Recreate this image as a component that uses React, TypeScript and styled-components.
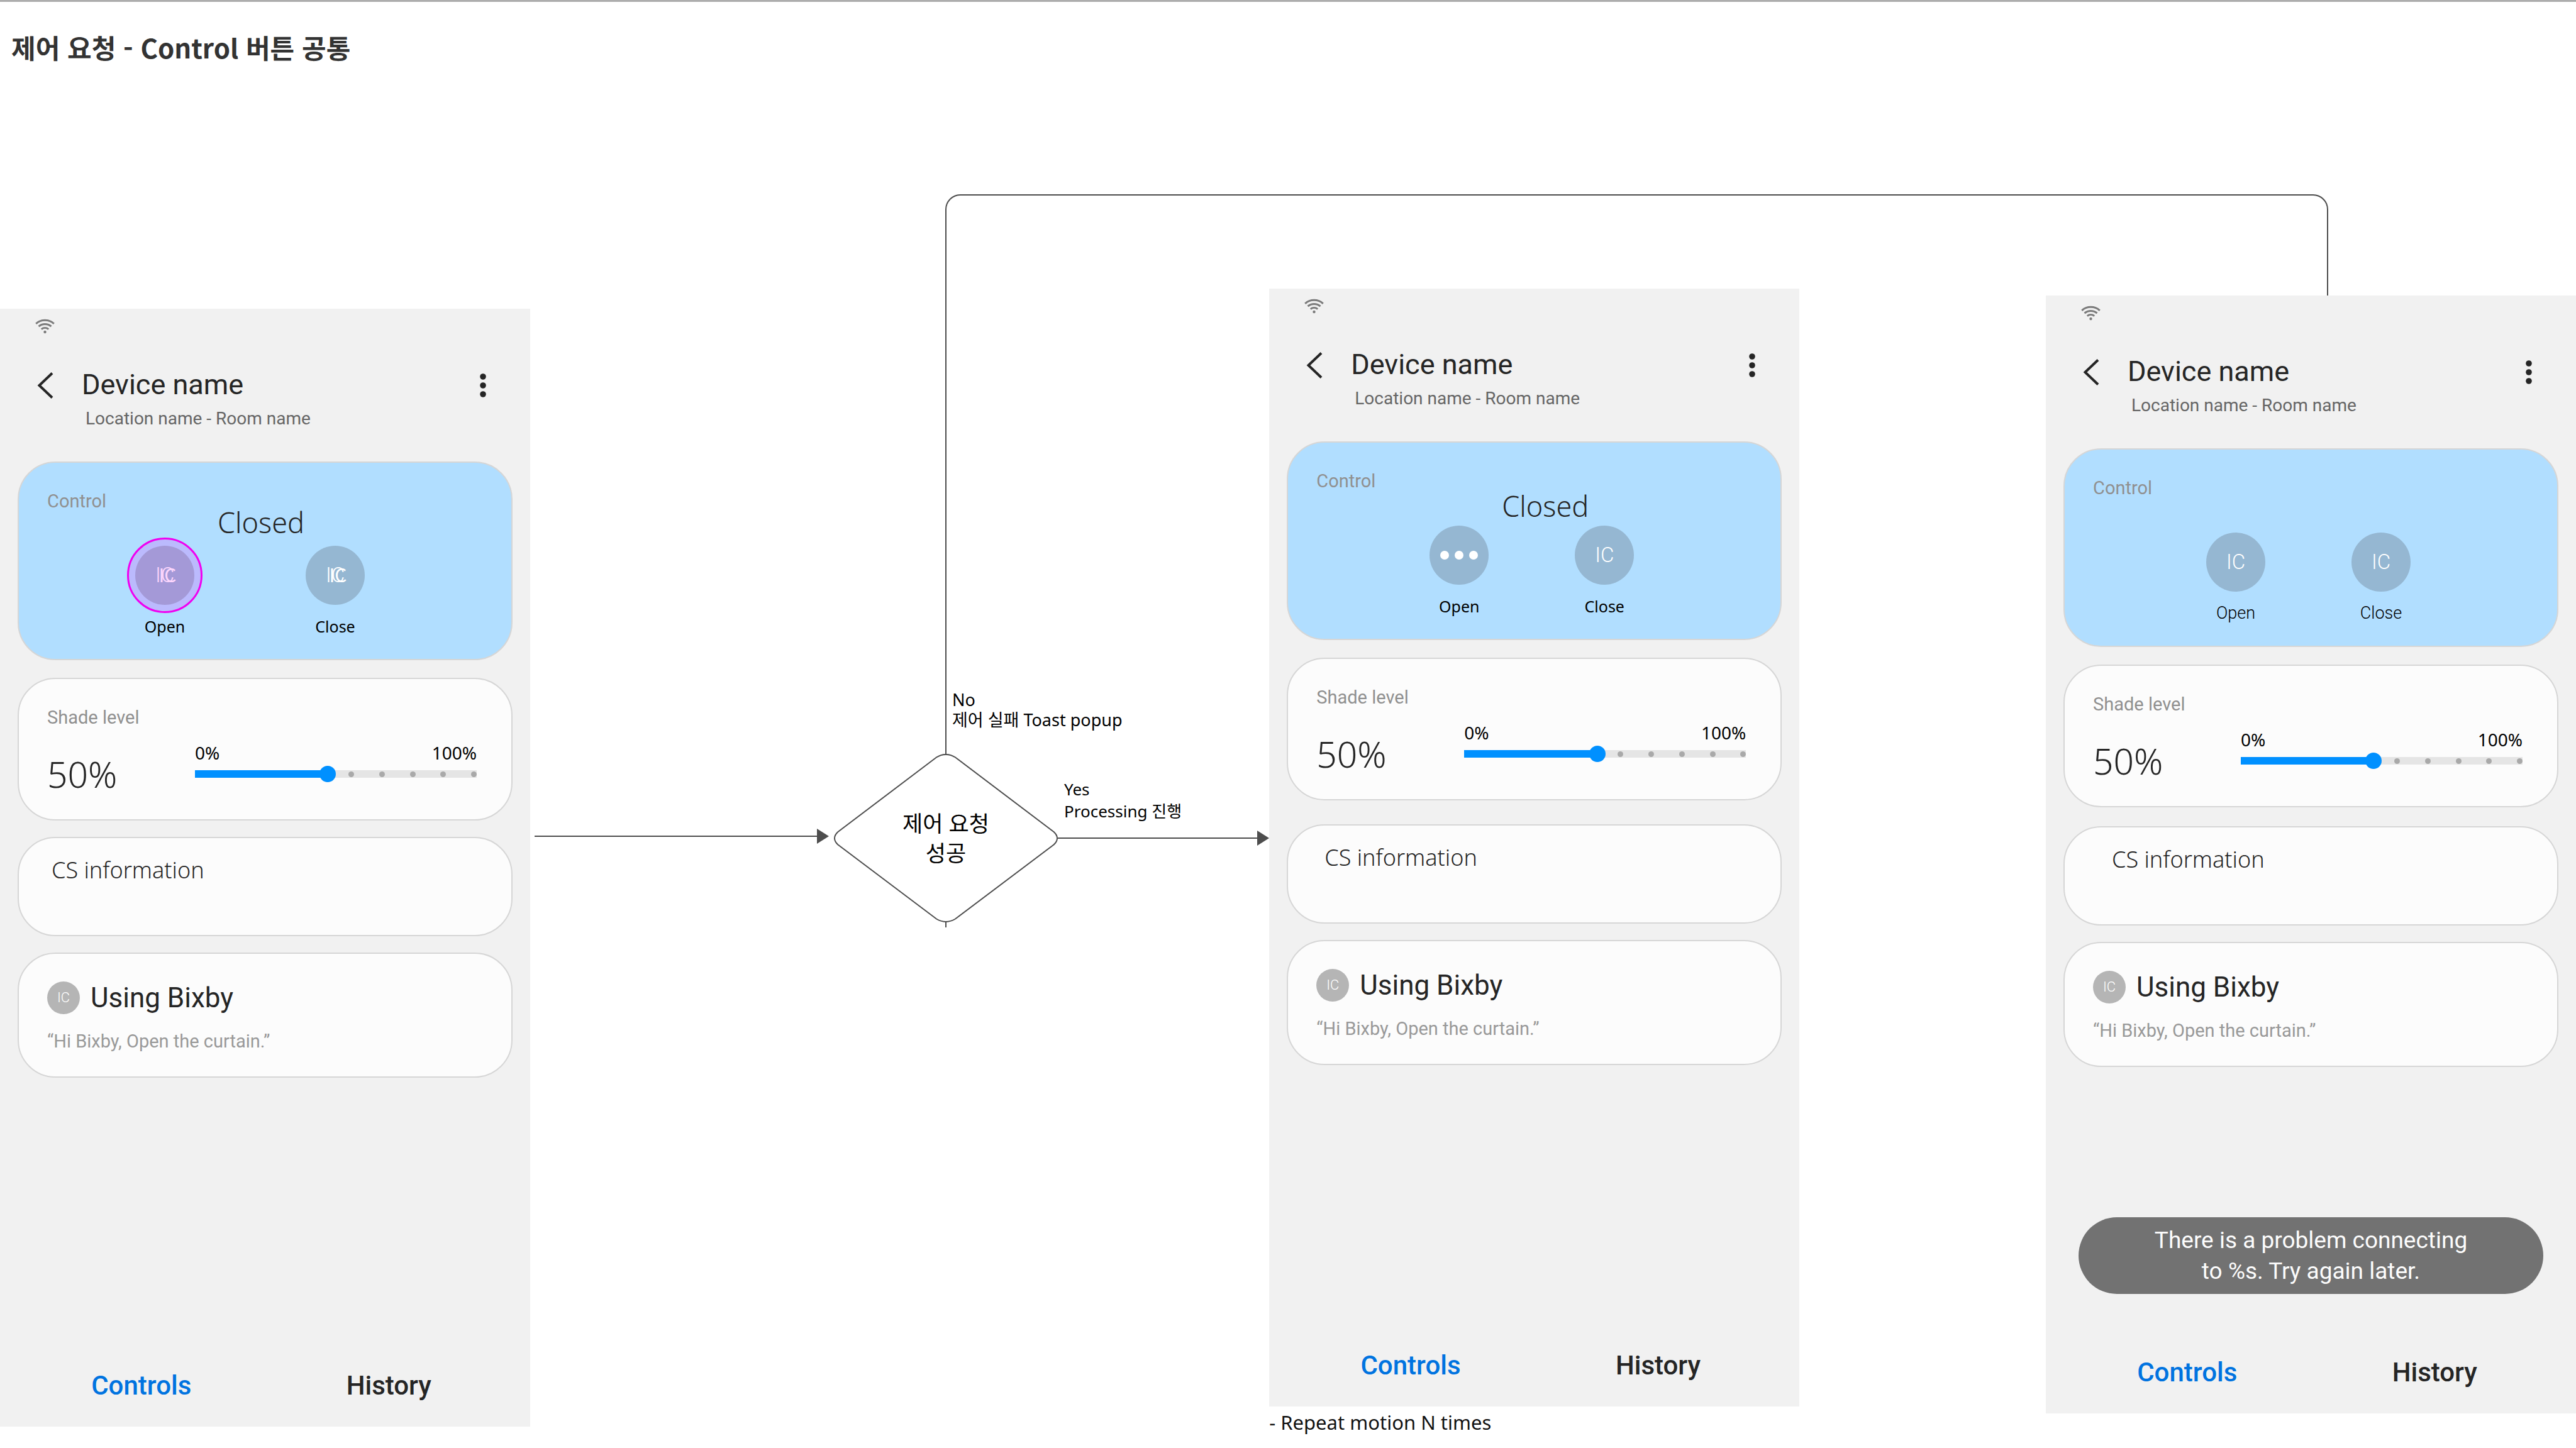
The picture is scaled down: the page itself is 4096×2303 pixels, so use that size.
import React from 'react';
import styled, { createGlobalStyle } from 'styled-components';

const samsung = '"Noto Sans", "Noto Sans CJK KR", sans-serif';
const korean = '"Noto Sans CJK KR", "Noto Sans", sans-serif';
const roboto = 'Roboto, "Noto Sans CJK KR", sans-serif';

const GlobalStyle = createGlobalStyle`
  *, *::before, *::after { box-sizing: border-box; }
  body { margin: 0; background: #fff; color: #000; font-family: ${samsung}; }
  h1, h2, h3, p { margin: 0; font-weight: 400; }
  button { border: 0; padding: 0; background: none; color: inherit; font: inherit; cursor: pointer; }
`;

const Page = styled.main`
  border-top: 3px solid #adadad;
`;

const PageTitle = styled.h1`
  padding: 42px 18px 2px;
  font: 700 42px/60px ${korean};
  color: #333;
`;

const Board = styled.div`
  display: grid;
  grid-template-columns: 843px 3fr 843px 1fr 843px;
  align-items: start;
`;

const ReturnPath = styled.div`
  grid-area: 1 / 2 / 2 / 6;
  height: 1166px;
  margin: 202px 394px 0 660px;
  border: 2px solid #4d4d4d;
  border-bottom: 0;
  border-radius: 24px 24px 0 0;
`;

const Column = styled.div<{ $col: number; $top: number }>`
  grid-area: 1 / ${(p) => p.$col};
  padding-top: ${(p) => p.$top}px;
  position: relative;
`;

/* ---------- flow chart ---------- */

const Flow = styled.div`
  position: relative;
  display: flex;
  align-items: center;
`;

const FirstArrow = styled.div`
  display: flex;
  align-items: center;
  width: 483px;
  padding: 0 8px 6px 7px;
`;

const NextArrow = styled.div`
  display: flex;
  flex: 1;
  align-items: center;
`;

const ArrowLine = styled.div`
  flex: 1;
  height: 2px;
  background: #4d4d4d;
`;

const Decision = styled.div`
  display: grid;
  place-items: center;
  width: 356px;
  height: 268px;
  text-align: center;
  font-size: 35px;
  line-height: 47px;
  > * { grid-area: 1 / 1; }
`;

const FlowNote = styled.p<{ $left: number; $top: number; $line: number; $size: number }>`
  position: absolute;
  left: ${(p) => p.$left}px;
  top: ${(p) => p.$top}px;
  font-size: ${(p) => p.$size}px;
  line-height: ${(p) => p.$line}px;
  white-space: nowrap;
`;

const Footnote = styled.p`
  font-size: 31px;
  line-height: 50px;
  color: #111;
`;

/* ---------- phone ---------- */

const Phone = styled.section`
  position: relative;
  display: flex;
  flex-direction: column;
  min-height: 1778px;
  background: #f1f1f1;
  color: #252525;
`;

const StatusBar = styled.div`
  height: 95px;
  padding: 15px 0 0 55px;
`;

const AppBar = styled.header`
  display: flex;
  align-items: flex-start;
  padding: 0 51px 48px 48px;
`;

const IconButton = styled.button`
  display: grid;
  place-items: center;
  width: 48px;
  height: 54px;
`;

const Heading = styled.div`
  flex: 1;
  padding-left: 34px;
  font-family: ${roboto};
`;

const DeviceName = styled.h2`
  font-size: 45px;
  line-height: 52px;
`;

const Location = styled.p`
  padding: 8px 0 0 6px;
  font-size: 28px;
  line-height: 40px;
  color: #666;
`;

const Cards = styled.div`
  display: flex;
  flex-direction: column;
  gap: 26px;
  padding: 0 28px;
`;

const Card = styled.article<{ $blue?: boolean; $gap?: number }>`
  margin-top: ${(p) => p.$gap ?? 0}px;
  padding: 41px 44px 32px 45px;
  border: 2px solid #d6d6d6;
  border-radius: 60px;
  background: ${(p) => (p.$blue ? '#b1deff' : '#fcfcfc')};
`;

const CardLabel = styled.h3`
  font: 400 29px/40px ${roboto};
  color: #909090;
`;

const State = styled.div<{ $start: number; $drop: number }>`
  height: 51px;
  padding: ${(p) => p.$drop}px 0 0 ${(p) => p.$start}px;
  font-size: 45px;
  font-weight: 300;
  line-height: 28px;
`;

const Actions = styled.div<{ $start: number; $gap: number }>`
  display: flex;
  gap: ${(p) => p.$gap}px;
  padding-left: ${(p) => p.$start}px;
`;

const ActionButton = styled.button<{ $roboto?: boolean }>`
  display: flex;
  flex-direction: column;
  align-items: center;
  gap: 14px;
  width: 94px;
  color: #000;
  font: ${(p) => (p.$roboto ? `300 27px/40px ${roboto}` : `400 25px/40px ${samsung}`)};
`;

const Disc = styled.span<{ $touched?: boolean }>`
  position: relative;
  display: grid;
  place-items: center;
  width: 94px;
  height: 94px;
  border-radius: 50%;
  background: #95b7d2;
  &::after {
    content: '';
    display: ${(p) => (p.$touched ? 'block' : 'none')};
    position: absolute;
    inset: -13px;
    border: 3px solid #f000f0;
    border-radius: 50%;
    background: rgba(240, 0, 240, 0.16);
  }
`;

const Initials = styled.span`
  grid-area: 1 / 1;
  color: #fff;
  font: 300 33px/40px ${roboto};
`;

const InitialsShade = styled(Initials)`
  padding: 0 0 4px 9px;
  font: 400 30px/40px ${korean};
`;

const Dots = styled.span`
  display: flex;
  gap: 9px;
`;

const Dot = styled.i`
  width: 14px;
  height: 14px;
  border-radius: 50%;
  background: #fff;
`;

const LevelRow = styled.div`
  display: flex;
  align-items: flex-start;
  justify-content: space-between;
  padding: 16px 11px 8px 0;
`;

const LevelValue = styled.output`
  padding-top: 22px;
  font-size: 57px;
  font-weight: 300;
  line-height: 64px;
`;

const SliderBox = styled.div`
  width: 448px;
`;

const Scale = styled.div`
  display: flex;
  justify-content: space-between;
  color: #000;
  font-size: 28px;
  line-height: 40px;
`;

const Slider = styled.div`
  display: grid;
  align-items: center;
  > * { grid-area: 1 / 1; }
`;

const Rail = styled.div`
  display: flex;
  align-items: center;
  justify-content: space-between;
  height: 12px;
  padding-left: 244px;
  background: #e5e5e5;
`;

const Tick = styled.i`
  width: 9px;
  height: 9px;
  border-radius: 50%;
  background: #a9a9a9;
`;

const Fill = styled.div`
  width: 212px;
  height: 12px;
  background: #0090ff;
`;

const Range = styled.input`
  appearance: none;
  width: 100%;
  height: 28px;
  margin: 0;
  background: transparent;
  &::-webkit-slider-thumb {
    appearance: none;
    width: 26px;
    height: 26px;
    border-radius: 50%;
    background: #0090ff;
  }
`;

const InfoCard = styled(Card)<{ $indent: number }>`
  padding: 27px 44px 79px ${(p) => p.$indent}px;
`;

const InfoText = styled.h3`
  font-size: 36px;
  font-weight: 300;
  line-height: 48px;
`;

const BixbyCard = styled(Card)`
  padding: 44px 44px 36px 45px;
`;

const BixbyRow = styled.div`
  display: flex;
  align-items: center;
  gap: 17px;
`;

const BixbyDisc = styled.span`
  display: grid;
  place-items: center;
  width: 52px;
  height: 52px;
  border-radius: 50%;
  background: #b5b5b5;
  color: #fff;
  font: 300 22px/24px ${roboto};
`;

const BixbyTitle = styled.h3`
  font: 400 44px/52px ${roboto};
`;

const Quote = styled.p`
  padding-top: 23px;
  font: 400 29px/40px ${roboto};
  color: #999;
`;

const Tabs = styled.nav`
  display: flex;
  margin-top: auto;
  padding: 0 28px 35px;
`;

const Tab = styled.button<{ $active?: boolean }>`
  flex: 1;
  font: 500 42px/60px ${roboto};
  color: ${(p) => (p.$active ? '#0073e0' : '#252525')};
`;

const Toast = styled.div`
  position: absolute;
  left: 52px;
  right: 52px;
  bottom: 190px;
  padding: 12px 100px;
  border-radius: 61px;
  background: #727272;
  color: #fcfcfc;
  text-align: center;
  font: 400 37px/49px ${roboto};
`;

const WifiIcon = () => (
  <svg width="33" height="26" viewBox="0 0 33 26" fill="none" stroke="#7b7b7b" strokeWidth="3">
    <path d="M2.200 8.800a21.500 21.500 0 0 1 28.600 0" />
    <path d="M6.500 13.200a15 15 0 0 1 20 0" />
    <path d="M10.800 17.600a9 9 0 0 1 11.400 0" />
    <circle cx="16.500" cy="22" r="2.200" fill="#7b7b7b" stroke="none" />
  </svg>
);

const BackIcon = () => (
  <svg width="28" height="46" viewBox="0 0 28 46" fill="none" stroke="#252525" strokeWidth="4">
    <path d="M25 3.500L4.500 23L25 42.500" strokeLinejoin="miter" />
  </svg>
);

const MoreIcon = () => (
  <svg width="10" height="38" viewBox="0 0 10 38" fill="#252525">
    <circle cx="5" cy="5" r="4.800" />
    <circle cx="5" cy="19" r="4.800" />
    <circle cx="5" cy="33" r="4.800" />
  </svg>
);

const ArrowHead = () => (
  <svg width="19" height="24" viewBox="0 0 19 24" fill="#4d4d4d">
    <path d="M0 0l19 12L0 24z" />
  </svg>
);

const DiamondShape = () => (
  <svg width="356" height="268" viewBox="0 0 356 268" fill="#fff" stroke="#4d4d4d" strokeWidth="2">
    <path d="M163 5.500Q178-3.500 193 5.500L349.500 124Q360.500 134 349.500 144.500L193 262.500Q178 271.500 163 262.500L6.500 144.500Q-4.500 134 6.500 124Z" />
  </svg>
);

type ScreenProps = {
  id: string;
  state?: string;
  stateStart?: number;
  stateDrop?: number;
  actionStart: number;
  actionGap: number;
  touched?: boolean;
  processing?: boolean;
  robotoLabels?: boolean;
  infoGap: number;
  infoIndent: number;
  toast?: React.ReactNode;
};

const Screen = (s: ScreenProps) => (
  <Phone>
    <StatusBar><WifiIcon /></StatusBar>
    <AppBar>
      <IconButton aria-label="Back"><BackIcon /></IconButton>
      <Heading>
        <DeviceName>Device name</DeviceName>
        <Location>Location name - Room name</Location>
      </Heading>
      <IconButton aria-label="More options"><MoreIcon /></IconButton>
    </AppBar>
    <Cards>
      <Card $blue>
        <CardLabel>Control</CardLabel>
        <State $start={s.stateStart ?? 0} $drop={s.stateDrop ?? 0}>{s.state}</State>
        <Actions $start={s.actionStart} $gap={s.actionGap}>
          <ActionButton $roboto={s.robotoLabels}>
            <Disc $touched={s.touched}>
              {s.processing ? <Dots><Dot /><Dot /><Dot /></Dots> : <Initials>IC</Initials>}
              {s.touched && <InitialsShade aria-hidden>IC</InitialsShade>}
            </Disc>
            Open
          </ActionButton>
          <ActionButton $roboto={s.robotoLabels}>
            <Disc>
              <Initials>IC</Initials>
              {s.touched && <InitialsShade aria-hidden>IC</InitialsShade>}
            </Disc>
            Close
          </ActionButton>
        </Actions>
      </Card>
      <Card $gap={2}>
        <CardLabel as="label" htmlFor={s.id}>Shade level</CardLabel>
        <LevelRow>
          <LevelValue htmlFor={s.id}>50%</LevelValue>
          <SliderBox>
            <Scale><span>0%</span><span>100%</span></Scale>
            <Slider>
              <Rail><Tick /><Tick /><Tick /><Tick /><Tick /></Rail>
              <Fill />
              <Range id={s.id} type="range" min={0} max={100} defaultValue={47} />
            </Slider>
          </SliderBox>
        </LevelRow>
      </Card>
      <InfoCard $gap={s.infoGap} $indent={s.infoIndent}>
        <InfoText>CS information</InfoText>
      </InfoCard>
      <BixbyCard>
        <BixbyRow>
          <BixbyDisc>IC</BixbyDisc>
          <BixbyTitle>Using Bixby</BixbyTitle>
        </BixbyRow>
        <Quote>“Hi Bixby, Open the curtain.”</Quote>
      </BixbyCard>
    </Cards>
    <Tabs>
      <Tab $active>Controls</Tab>
      <Tab>History</Tab>
    </Tabs>
    {s.toast && <Toast role="status">{s.toast}</Toast>}
  </Phone>
);

export default function App() {
  return (
    <Page lang="ko">
      <GlobalStyle />
      <PageTitle>제어 요청 - Control 버튼 공통</PageTitle>
      <Board>
        <ReturnPath />
        <Column $col={1} $top={384}>
          <Screen id="shade-start" state="Closed" stateStart={271} actionStart={140} actionGap={177} touched infoGap={0} infoIndent={52} />
        </Column>
        <Column $col={2} $top={1092}>
          <Flow>
            <FirstArrow><ArrowLine /><ArrowHead /></FirstArrow>
            <Decision>
              <DiamondShape />
              <p>제어 요청<br />성공</p>
            </Decision>
            <NextArrow><ArrowLine /><ArrowHead /></NextArrow>
            <FlowNote $left={671} $top={-102} $line={32} $size={27}>No<br />제어 실패 Toast popup</FlowNote>
            <FlowNote $left={849} $top={39} $line={35} $size={26}>Yes<br />Processing 진행</FlowNote>
          </Flow>
        </Column>
        <Column $col={3} $top={352}>
          <Screen id="shade-processing" state="Closed" stateStart={295} stateDrop={6} actionStart={180} actionGap={137} processing infoGap={12} infoIndent={58} />
          <Footnote>- Repeat motion N times</Footnote>
        </Column>
        <Column $col={5} $top={363}>
          <Screen
            id="shade-failed"
            actionStart={180}
            actionGap={137}
            robotoLabels
            infoGap={4}
            infoIndent={75}
            toast={<>There is a problem connecting<br />to %s. Try again later.</>}
          />
        </Column>
      </Board>
    </Page>
  );
}
